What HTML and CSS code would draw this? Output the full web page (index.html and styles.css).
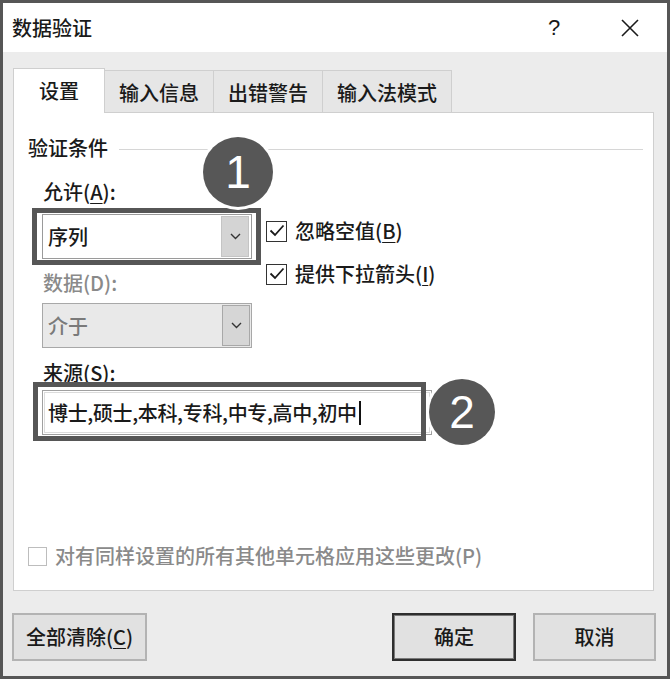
FILE: index.html
```html
<!DOCTYPE html>
<html lang="zh-CN">
<head>
<meta charset="utf-8">
<title>数据验证</title>
<link rel="stylesheet" href="styles.css">
</head>
<body>
<div class="dialog">
  <div class="titlebar">
    <span class="title">数据验证</span>
    <span class="help">?</span>
    <span class="close"><svg width="18" height="18" viewBox="0 0 18 18"><path d="M1 1L17 17M17 1L1 17" stroke="#1a1a1a" stroke-width="1.6" fill="none"/></svg></span>
  </div>
  <div class="tabs">
    <div class="tab active">设置</div>
    <div class="tab">输入信息</div>
    <div class="tab">出错警告</div>
    <div class="tab">输入法模式</div>
  </div>
  <div class="panel">
    <div class="legend"><span>验证条件</span><span class="rule"></span></div>
    <div class="cond">
      <div class="label l-allow">允许(<u>A</u>):</div>
      <div class="combo c-allow">
        <span class="val">序列</span>
        <span class="drop"><svg width="11" height="7" viewBox="0 0 11 7"><path d="M1 1L5.5 5.5L10 1" stroke="#333" stroke-width="1.4" fill="none"/></svg></span>
      </div>
      <div class="checks">
        <div class="check"><span class="box"><svg width="18" height="18" viewBox="0 0 18 18"><path d="M2.5 8.5L7 13L15.5 3.5" stroke="#1a1a1a" stroke-width="1.8" fill="none"/></svg></span><span>忽略空值(<u>B</u>)</span></div>
        <div class="check"><span class="box"><svg width="18" height="18" viewBox="0 0 18 18"><path d="M2.5 8.5L7 13L15.5 3.5" stroke="#1a1a1a" stroke-width="1.8" fill="none"/></svg></span><span>提供下拉箭头(<u>I</u>)</span></div>
      </div>
      <div class="label dis l-data">数据(D):</div>
      <div class="combo dis c-data">
        <span class="val">介于</span>
        <span class="drop"><svg width="11" height="7" viewBox="0 0 11 7"><path d="M1 1L5.5 5.5L10 1" stroke="#333" stroke-width="1.4" fill="none"/></svg></span>
      </div>
    </div>
    <div class="label l-src">来源(<u>S</u>):</div>
    <div class="input">博士,硕士,本科,专科,中专,高中,初中<span class="caret"></span></div>
    <div class="apply"><span class="box empty"></span><span>对有同样设置的所有其他单元格应用这些更改(P)</span></div>
  </div>
  <div class="buttons">
    <div class="btn b-clear">全部清除(<u>C</u>)</div>
    <div class="spacer"></div>
    <div class="btn b-ok">确定</div>
    <div class="btn b-cancel">取消</div>
  </div>
</div>
<div class="hl hl1"></div>
<div class="hl hl2"></div>
<div class="mark m1">1</div>
<div class="mark m2">2</div>
</body>
</html>
```
FILE: styles.css
```css
* { box-sizing: border-box; }
html, body { margin: 0; padding: 0; }
body {
  width: 670px;
  height: 679px;
  overflow: hidden;
  font-family: "Noto Sans CJK SC", "Noto Sans", sans-serif;
  font-size: 20px;
  font-weight: 500;
  line-height: 24px;
  color: #1a1a1a;
  background: #ececec;
}
u { text-decoration: underline; text-underline-offset: 3px; text-decoration-thickness: 1px; }

.dialog {
  width: 670px;
  height: 679px;
  border: 3px solid #565656;
  background: #ececec;
  display: flex;
  flex-direction: column;
}

.titlebar {
  height: 49px;
  background: #fff;
  display: flex;
  align-items: center;
  padding: 0 28px 0 9px;
}
.title { padding-top: 1px; }
.help {
  margin-left: auto;
  width: 20px;
  text-align: center;
  font-family: "Liberation Sans", sans-serif;
  font-weight: 400;
  font-size: 22px;
  padding-top: 1px;
}
.close { margin-left: 57px; display: flex; }

.tabs {
  display: flex;
  align-items: flex-end;
  margin: 16px 13px 0 10px;
  height: 44px;
  position: relative;
  z-index: 1;
}
.tab {
  height: 42px;
  padding: 3px 14px 0;
  display: flex;
  align-items: center;
  background: #e6e6e6;
  border: 1px solid #cfcfcf;
  border-bottom: none;
  border-left: none;
}
.tab.active {
  height: 45px;
  margin-bottom: -1px;
  padding: 0 25px;
  background: #fff;
  border-left: 1px solid #cfcfcf;
}

.panel {
  margin: 0 13px 0 10px;
  height: 479px;
  background: #fff;
  border: 1px solid #cfcfcf;
  display: flex;
  flex-direction: column;
  padding: 23px 10px 22px 14px;
}
.legend { display: flex; align-items: center; height: 24px; }
.legend .rule { flex: 1; height: 1px; background: #d6d6d6; margin-left: 11px; margin-top: 2px; }

.cond {
  margin: 20px 0 0 14px;
  display: grid;
  grid-template-columns: 210px 1fr;
  column-gap: 14px;
  align-items: start;
}
.label { padding-left: 1px; height: 24px; }
.label.dis { color: #8a8a8a; }
.l-allow { grid-column: 1; grid-row: 1; }
.c-allow { grid-column: 1; grid-row: 2; margin-top: 10px; }
.l-data { grid-column: 1; grid-row: 3; margin-top: 12px; }
.c-data { grid-column: 1; grid-row: 4; margin-top: 8px; }
.checks {
  grid-column: 2;
  grid-row: 2 / span 3;
  padding-top: 15px;
  display: flex;
  flex-direction: column;
  gap: 19px;
}
.check { display: flex; align-items: center; gap: 8px; height: 24px; }
.box {
  width: 21px;
  height: 21px;
  border: 1.5px solid #333;
  background: #fff;
  display: flex;
  align-items: center;
  justify-content: center;
}
.box.empty { border: 1px solid #bdbdbd; width: 19px; height: 19px; }

.combo {
  height: 45px;
  border: 1px solid #9a9a9a;
  background: #fff;
  display: flex;
  align-items: stretch;
  padding: 1px;
}
.combo .val { flex: 1; display: flex; align-items: center; padding-left: 4px; }
.combo .drop {
  width: 28px;
  background: #d4d4d4;
  border: 1px solid #c4c4c4;
  display: flex;
  align-items: center;
  justify-content: center;
  margin-right: 1px;
}
.combo.dis { background: #e9e9e9; border-color: #a8a8a8; color: #7a7a7a; }
.combo.dis .drop { background: #d6d6d6; border-color: #a8a8a8; margin-right: 0; }

.l-src { margin: 13px 0 0 14px; }
.input {
  margin: 5px 0 0 14px;
  width: 390px;
  height: 45px;
  border: 1px solid #a0a0a0;
  box-shadow: inset 0 0 0 1px #fff, inset 0 0 0 2px #dcdcdc;
  display: flex;
  align-items: center;
  padding-left: 5px;
  letter-spacing: -0.35px;
}
.caret { width: 2px; height: 24px; background: #111; margin-left: 2px; }

.apply {
  margin-top: auto;
  display: flex;
  align-items: center;
  gap: 8px;
  color: #8a8a8a;
  height: 24px;
}

.buttons {
  display: flex;
  margin-top: 22px;
  padding: 0 11px 0 9px;
}
.spacer { flex: 1; }
.btn {
  height: 48px;
  background: #e1e1e1;
  border: 2px solid #b3b3b3;
  display: flex;
  align-items: center;
  justify-content: center;
}
.b-clear { width: 135px; }
.b-ok { width: 124px; border: 2px solid #2e2e2e; box-shadow: inset 0 0 0 1px #7a7a7a; }
.b-cancel { width: 123px; margin-left: 17px; }

.hl {
  position: absolute;
  border: 5px solid #565656;
}
.hl1 { left: 32px; top: 208px; width: 229px; height: 57px; }
.hl2 { left: 33px; top: 382px; width: 393px; height: 59px; }

.mark {
  position: absolute;
  border-radius: 50%;
  background: #575757;
  color: #fff;
  font-family: "Liberation Sans", "Arial", sans-serif;
  font-weight: 400;
  font-size: 46px;
  display: flex;
  align-items: center;
  justify-content: center;
  box-shadow: 0 0 0 3px #fff;
}
.m1 { left: 203px; top: 137px; width: 70px; height: 70px; line-height: 70px; }
.m2 { left: 429px; top: 379px; width: 66px; height: 66px; line-height: 66px; }
```
